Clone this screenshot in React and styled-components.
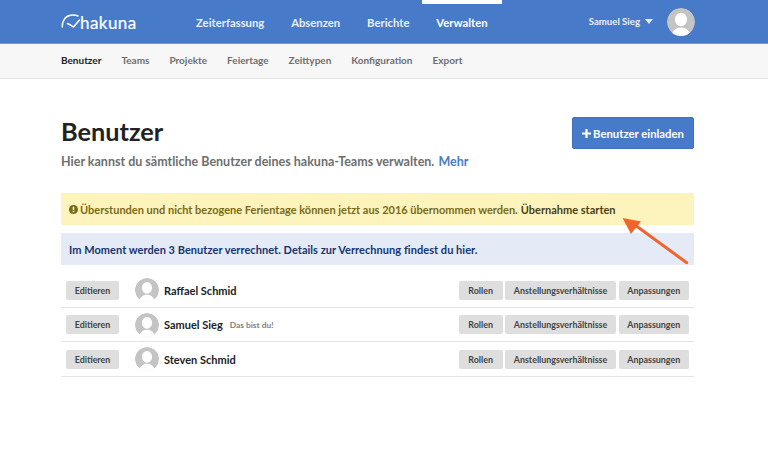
import React from "react";
import styled, { createGlobalStyle } from "styled-components";

const Global = createGlobalStyle`
  html, body { margin: 0; padding: 0; background: #fff; }
  body { font-family: Lato, "Liberation Sans", sans-serif; font-weight: 700; width: 768px; height: 450px; overflow: hidden; }
`;

const Page = styled.div`position: relative; width: 768px; height: 450px; overflow: hidden;`;
const Header = styled.header`
  height: 43px; background: #477bca; border-bottom: 1px solid #6f9ad8;
  padding: 0 73px 0 61px; display: flex; align-items: center;
`;
const Logo = styled.div`width: 75px; height: 20px; display: flex; align-items: center; margin-top: 1px; color: #fff; font-size: 17px; font-weight: 400; letter-spacing: .45px; -webkit-text-stroke: .2px #fff;`;
const LogoMark = styled.svg`width: 20px; height: 16px; margin-right: -1px; margin-top: -4px; flex: none; overflow: visible;`;
const MainNav = styled.nav`display: flex; height: 43px; margin-left: 46px; flex: 1;`;
const NavItem = styled.a`
  display: flex; align-items: center; padding: 1px 14px 0; margin-right: -1.2px; height: 43px; box-sizing: border-box;
  color: ${p => (p.$active ? "#fff" : "#e9effa")}; font-size: 11.3px; position: relative;
  ${p => p.$active && "&::before { content: ''; position: absolute; left: 0; right: 0; top: 0; height: 4px; background: #fff; }"}
`;
const UserMenu = styled.div`display: flex; align-items: center; color: #e9effa; font-size: 9.6px;`;
const Caret = styled.span`width: 0; height: 0; border-left: 4px solid transparent; border-right: 4px solid transparent; border-top: 5px solid #e9effa; margin: 0 14px 0 5px;`;
const Avatar = styled.svg`width: ${p => p.$size}px; height: ${p => p.$size}px; display: block; flex: none; border-radius: 50%;`;
const SubNav = styled.nav`
  height: 34px; box-sizing: content-box; background: #f7f7f7; border-bottom: 1px solid #e5e5e5; padding-left: 61px;
  display: flex; align-items: center; gap: 20px; font-size: 10px;
`;
const SubItem = styled.a`color: ${p => (p.$active ? "#222" : "#6e6e6e")}; margin-top: -2px;`;
const Content = styled.main`padding: 38px 74px 0 61px;`;
const TitleRow = styled.div`display: flex; justify-content: space-between; align-items: flex-start;`;
const Title = styled.h1`margin: 0; font-size: 25.3px; line-height: 29px; color: #222; font-weight: 700;`;
const Lead = styled.p`margin: 7px 0 0; font-size: 12.5px; line-height: 18px; color: #6e6e6e; `;
const More = styled.a`color: #477bca; margin-left: 1px;`;
const PrimaryButton = styled.button`
  height: 32px; width: 122px; padding: 0; border: 1px solid #3f70bb; border-radius: 2px; background: #477bca;
  color: #fff; font: 700 11.3px Lato, sans-serif; display: flex; align-items: center; justify-content: center; gap: 2px;
`;
const Alert = styled.div`
  height: 32px; padding: 0 8px; display: flex; align-items: center; font-size: 11px;
  background: ${p => p.$info ? "#e4ebf7" : "#fdf4bd"}; color: ${p => p.$info ? "#16346f" : "#7a6a14"};
  margin-top: ${p => p.$info ? "8px" : "0"};
  letter-spacing: ${p => p.$info ? ".04px" : "0"};
`;
const Strong = styled.span`color: #4a3f10; margin-left: 3px;`;
const InfoIcon = styled.svg`width: 9px; height: 9px; margin-right: 2px; flex: none;`;
const Alerts = styled.div`margin-top: 22px;`;
const Rows = styled.div`margin-top: 8px;`;
const Row = styled.div`
  border-bottom: 1px solid #e4e4e4; padding: 1px 5px 0;
  display: flex; align-items: center; box-sizing: border-box; height: 34.6px;
`;
const Btn = styled.button`
  height: 19px; padding: 0 ${p => p.$pad || 9}px; border: 0; border-radius: 2px; background: #dedede; color: #444;
  font: 700 8.9px Lato, sans-serif; white-space: nowrap;
`;
const Name = styled.span`font-size: 11px; color: #222; margin-left: 5px;`;
const Note = styled.span`font-size: 8.4px; color: #808080; margin-left: 7px;`;
const AvatarWrap = styled.div`margin-left: 16px;`;
const Actions = styled.div`display: flex; gap: 2.5px; margin-left: auto;`;
const Arrow = styled.svg`position: absolute; left: 615px; top: 210px; width: 80px; height: 60px;`;

const Person = ({ size }) => (
  <Avatar $size={size} viewBox="0 0 28 28">
    <circle cx="14" cy="14" r="14" fill="#c4c4c4" />
    <ellipse cx="14" cy="11.5" rx="6" ry="6.8" fill="#fff" />
    <path d="M4.5 28c.6-5.5 5-8.5 9.5-8.5s8.900 3 9.500 8.500z" fill="#fff" />
  </Avatar>
);

const people = [["Raffael Schmid"], ["Samuel Sieg", "Das bist du!"], ["Steven Schmid"]];

export default function App() {
  return (
    <Page>
      <Global />
      <Header>
        <Logo>
          <LogoMark viewBox="0 0 20 16" fill="none" stroke="#fff" strokeWidth="1.5" strokeLinecap="round" strokeLinejoin="round">
            <path d="M1.300 15C1 9 4.500 4 9.500 3.300c2.800-.4 5.500-.1 7.500.7" />
            <path d="M6.500 11.500c2 .8 4 2 6 3.500L18.500 8" />
          </LogoMark>
          hakuna
        </Logo>
        <MainNav>
          <NavItem>Zeiterfassung</NavItem>
          <NavItem>Absenzen</NavItem>
          <NavItem>Berichte</NavItem>
          <NavItem $active>Verwalten</NavItem>
        </MainNav>
        <UserMenu>Samuel Sieg<Caret /><Person size={28} /></UserMenu>
      </Header>
      <SubNav>
        <SubItem $active>Benutzer</SubItem>
        <SubItem>Teams</SubItem>
        <SubItem>Projekte</SubItem>
        <SubItem>Feiertage</SubItem>
        <SubItem>Zeittypen</SubItem>
        <SubItem>Konfiguration</SubItem>
        <SubItem>Export</SubItem>
      </SubNav>
      <Content>
        <TitleRow>
          <div>
            <Title>Benutzer</Title>
            <Lead>Hier kannst du sämtliche Benutzer deines hakuna-Teams verwalten. <More>Mehr</More></Lead>
          </div>
          <PrimaryButton>
            <svg width="9" height="9" viewBox="0 0 9 9"><path d="M3.400 0h2.200v3.400H9v2.200H5.600V9H3.400V5.600H0V3.400h3.400z" fill="#fff" /></svg>
            Benutzer einladen
          </PrimaryButton>
        </TitleRow>
        <Alerts>
          <Alert>
            <InfoIcon viewBox="0 0 10 10"><circle cx="5" cy="5" r="5" fill="#7a6a14" /><rect x="4.100" y="2" width="1.800" height="3.800" fill="#fdf4bd" /><rect x="4.100" y="6.500" width="1.800" height="1.700" fill="#fdf4bd" /></InfoIcon>
            Überstunden und nicht bezogene Ferientage können jetzt aus 2016 übernommen werden.<Strong>Übernahme starten</Strong>
          </Alert>
          <Alert $info>Im Moment werden 3 Benutzer verrechnet. Details zur Verrechnung findest du hier.</Alert>
        </Alerts>
        <Rows>
          {people.map(([name, note]) => (
            <Row key={name}>
              <Btn $pad={8.7}>Editieren</Btn>
              <AvatarWrap><Person size={24} /></AvatarWrap>
              <Name>{name}</Name>
              {note && <Note>{note}</Note>}
              <Actions>
                <Btn $pad={9.5}>Rollen</Btn>
                <Btn $pad={8.8}>Anstellungsverhältnisse</Btn>
                <Btn $pad={8.8}>Anpassungen</Btn>
              </Actions>
            </Row>
          ))}
        </Rows>
      </Content>
      <Arrow viewBox="0 0 80 60">
        <path d="M71.700 52.700L20 15" stroke="#f0652a" strokeWidth="3" strokeLinecap="round" />
        <path d="M7.500 8L26 11.500L16 24z" fill="#f0652a" />
      </Arrow>
    </Page>
  );
}
